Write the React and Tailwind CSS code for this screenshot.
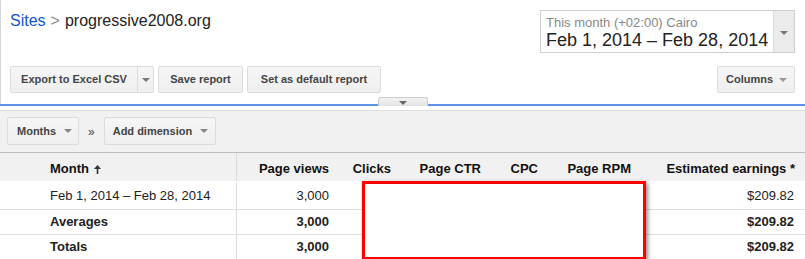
import React from 'react';

const Caret = ({ color = 'border-t-[#777]' }) => (
  <span
    className={`inline-block w-0 h-0 border-l-[4px] border-r-[4px] border-t-[4px] border-l-transparent border-r-transparent ${color}`}
  />
);

const btn =
  'h-[27px] border border-[#dcdcdc] rounded-[2px] bg-linear-to-b from-[#f6f6f6] to-[#efefef] text-[11px] font-bold text-[#444] flex items-center justify-center';

const columns = ['Page views', 'Clicks', 'Page CTR', 'CPC', 'Page RPM', 'Estimated earnings *'];

const rows = [
  { label: 'Feb 1, 2014 – Feb 28, 2014', views: '3,000', earnings: '$209.82', bold: false },
  { label: 'Averages', views: '3,000', earnings: '$209.82', bold: true },
  { label: 'Totals', views: '3,000', earnings: '$209.82', bold: true },
];

const grid = 'grid grid-cols-[237px_102px_62px_90px_57px_93px_164px]';

const App = () => {
  return (
    <div className="relative w-[805px] h-[259px] overflow-hidden bg-white text-[#222] font-['Liberation_Sans',Arial,sans-serif]">
      {/* header area */}
      <div className="h-[104px] border-l border-[#d6d6d6] pl-[9px] pr-[10px] pt-[10px]">
        <div className="flex items-start justify-between">
          <div className="mt-[1px] text-[16px] leading-[20px]">
            <span className="text-[#1155cc]">Sites</span>
            <span className="text-[#888] mx-[5px]">&gt;</span>
            <span>progressive2008.org</span>
          </div>
          <div className="flex w-[255px] h-[43px] border border-[#cfcfcf]">
            <div className="flex-1 pl-[5px] pt-[4px]">
              <div className="text-[13px] leading-[15px] text-[#888]">This month (+02:00) Cairo</div>
              <div className="text-[18px] leading-[20px] text-[#222]">Feb 1, 2014 – Feb 28, 2014</div>
            </div>
            <div className="w-[21px] border-l border-[#dcdcdc] bg-[#ebebeb] flex justify-center pt-[20px]">
              <Caret />
            </div>
          </div>
        </div>

        <div className="flex items-center gap-[4px] mt-[13px]">
          <div className="flex h-[27px] border border-[#dcdcdc] rounded-[2px] bg-linear-to-b from-[#f6f6f6] to-[#efefef]">
            <div className="w-[126px] flex items-center justify-center text-[11px] font-bold text-[#444]">
              Export to Excel CSV
            </div>
            <div className="w-[16px] border-l border-[#dcdcdc] flex items-center justify-center">
              <Caret />
            </div>
          </div>
          <div className={`${btn} w-[85px]`}>Save report</div>
          <div className={`${btn} w-[134px]`}>Set as default report</div>
          <div className={`${btn} w-[78px] ml-auto justify-start pl-[8px] gap-[6px]`}>
            Columns
            <Caret color="border-t-[#999]" />
          </div>
        </div>
      </div>

      {/* blue rule with collapse tab */}
      <div className="relative h-[2px] bg-[#5b93e8]">
        <div className="absolute left-[378px] top-[-7px] w-[50px] h-[9px] border border-b-0 border-[#cdcdcd] rounded-t-[3px] bg-linear-to-b from-[#f4f4f4] to-[#e3e3e3] flex justify-center pt-[3px]">
          <Caret color="border-t-[#666]" />
        </div>
      </div>
      <div className="h-[4px]" />

      {/* dimension bar */}
      <div className="h-[43px] border-t border-[#dddddd] border-b border-b-[#bdbdbd] bg-[#f1f1f1] flex items-start pt-[6px] pl-[7px]">
        <div className={`${btn} w-[72px] h-[28px] justify-start pl-[9px] gap-[8px]`}>
          Months
          <Caret color="border-t-[#888]" />
        </div>
        <span className="ml-[9px] mr-[9px] mt-[6px] text-[12px] text-[#444]">»</span>
        <div className={`${btn} w-[112px] h-[28px] justify-start pl-[8px] gap-[8px]`}>
          Add dimension
          <Caret color="border-t-[#888]" />
        </div>
      </div>

      {/* table */}
      <div className={`${grid} h-[28px] bg-[#f1f1f1] text-[13px] font-bold text-[#111]`}>
        <div className="border-r border-[#dcdcdc] pl-[50px] pt-[3px] flex items-center gap-[5px]">
          Month
          <svg width="7" height="9" viewBox="0 0 7 9" className="mt-[1px]">
            <path d="M3.5 0 L7 4 L4.3 4 L4.3 9 L2.7 9 L2.7 4 L0 4 Z" fill="#333" />
          </svg>
        </div>
        {columns.map((c) => (
          <div key={c} className="flex items-center justify-end pr-[10px] pt-[3px]">
            {c}
          </div>
        ))}
      </div>

      {rows.map((r, i) => (
        <div
          key={r.label}
          className={`${grid} text-[13px] ${r.bold ? 'font-bold' : ''} ${
            i === 0 ? 'h-[29px] pt-[2px]' : i === 1 ? 'h-[25px]' : 'h-[24px]'
          } ${i < 2 ? 'border-b border-[#dedede]' : ''}`}
        >
          <div className="border-r border-[#dcdcdc] pl-[50px] flex items-center">{r.label}</div>
          <div className="flex items-center justify-end pr-[10px]">{r.views}</div>
          <div />
          <div />
          <div />
          <div />
          <div className="flex items-center justify-end pr-[11px]">{r.earnings}</div>
        </div>
      ))}

      {/* redaction box */}
      <div className="absolute left-[362px] top-[181px] w-[284px] h-[79px] border-[3px] border-[#ff0000] bg-white shadow-[2px_2px_4px_rgba(0,0,0,0.45)]" />
    </div>
  );
};

export default App;
